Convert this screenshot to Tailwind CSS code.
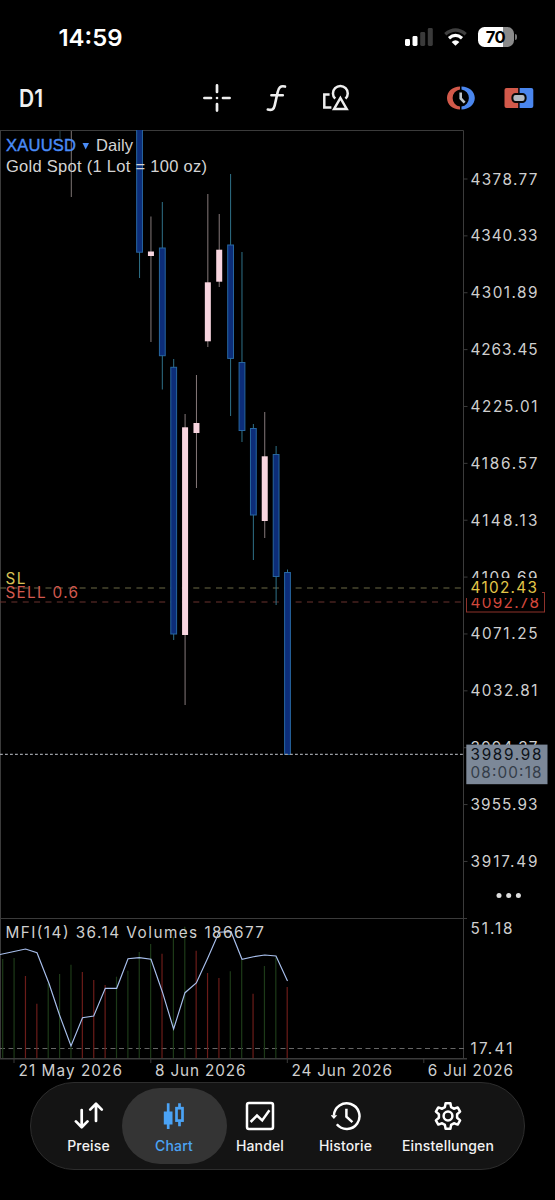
<!DOCTYPE html>
<html lang="de">
<head>
  <meta charset="UTF-8" />
  <meta name="viewport" content="width=device-width, initial-scale=1.0" />
  <title>XAUUSD Daily</title>
  <script src="https://cdn.jsdelivr.net/npm/@tailwindcss/browser@4"></script>
</head>
<body class="bg-black text-white font-['Inter','Liberation_Sans',sans-serif]">
<div class="w-[555px] h-[1200px] flex flex-col overflow-hidden bg-black">

  <!-- status bar -->
  <header class="h-[65px] flex items-center justify-between pl-[56px] pr-[38px] pt-[9px] shrink-0">
    <svg class="w-[70px] h-[32px]" viewBox="0 0 70 32">
      <text x="2.5" y="24.8" textLength="64" lengthAdjust="spacingAndGlyphs" class="fill-white text-[23.5px] font-semibold">14:59</text>
    </svg>
    <div class="flex items-center gap-[11px]">
      <svg class="w-[28px] h-[18px]" viewBox="0 0 28 18">
        <rect x="0" y="11" width="5" height="7" rx="1.4" fill="#fff" />
        <rect x="7.5" y="8" width="5" height="10" rx="1.4" fill="#fff" />
        <rect x="15.2" y="4" width="5" height="14" rx="1.4" fill="#3a3a3a" />
        <rect x="22.8" y="0" width="5" height="18" rx="1.4" fill="#3a3a3a" />
      </svg>
      <svg class="w-[23px] h-[18px]" viewBox="0 0 23 18" fill="none">
        <path d="M1.3 6.2Q11.5 -2.2 21.7 6.2" stroke="#3f3f3f" stroke-width="3.4" />
        <path d="M5 10.2Q11.5 4.6 18 10.2" stroke="#fff" stroke-width="3.2" />
        <path d="M7.6 14Q11.5 10.6 15.4 14L11.5 17.8Z" fill="#fff" />
      </svg>
      <div class="flex items-center gap-[1.5px]">
        <div class="w-[36px] h-[20px] rounded-[6.5px] bg-linear-to-r from-white from-70% to-[#8a8a8a] to-70% text-black text-[16.5px] leading-[20px] font-bold text-center tracking-tight">70</div>
        <div class="w-[2px] h-[6px] rounded-r-full bg-[#777]"></div>
      </div>
    </div>
  </header>

  <!-- toolbar -->
  <div class="h-[65px] flex items-center justify-between pl-[17px] pr-[21px] shrink-0">
    <svg class="w-[30px] h-[34px]" viewBox="0 0 30 34">
      <text x="2" y="25.5" textLength="24" lengthAdjust="spacingAndGlyphs" class="fill-[#f0f0f0] text-[24px] font-semibold">D1</text>
    </svg>
    <div class="flex items-center gap-[34px] pl-[59px]">
      <svg class="w-[30px] h-[30px]" viewBox="0 0 30 30" stroke="#eee" stroke-width="2.7" stroke-linecap="round">
        <path d="M15 2.4V9M15 21V27.6M2.4 15H9M21 15H27.6" />
        <path d="M15 15V15.01" stroke-width="2.6" />
      </svg>
      <svg class="w-[22px] h-[30px]" viewBox="0 0 22 30" fill="none" stroke="#eee" stroke-width="2.6" stroke-linecap="round">
        <path d="M19 3.6C14.5 2.4 12.6 4.6 11.7 9L8.7 22.4C7.9 26.2 6 27.6 1.8 26.5M5.4 12.3H16.8" />
      </svg>
      <svg class="w-[28px] h-[30px]" viewBox="0 0 28 30" fill="none" stroke="#eee" stroke-width="2.5">
        <path d="M7.6 11.6H2.3V24.6H9.4" />
        <path d="M13.2 15.7A7.4 7.4 0 1 1 23.5 15.7" />
        <path d="M18.4 15L24.7 26H12.1Z" />
      </svg>
    </div>
    <div class="flex items-center gap-[28px]">
      <svg class="w-[30px] h-[26px]" viewBox="0 0 30 26">
        <path d="M14 1.5C6.5 1.5 1 6.5 1 13S6.5 24.5 14 24.5V21.6A8.7 8.7 0 0 1 14 4.4Z" fill="#d2594a" />
        <path d="M15.5 1.5C23 1.5 28.8 6.5 28.8 13S23 24.5 15.5 24.5V21.6A8.7 8.7 0 0 0 15.5 4.4Z" fill="#4a86ee" />
        <path d="M14.7 7.5V13.5L18.6 17.6" fill="none" stroke="#bcc3ca" stroke-width="2.6" />
      </svg>
      <svg class="w-[30px] h-[20px]" viewBox="0 0 30 20">
        <path d="M2.5 0H14.2V20H2.5Q.5 20 .5 18V2Q.5 0 2.5 0Z" fill="#d2594a" />
        <path d="M15.6 0H27.3Q29.3 0 29.3 2V18Q29.3 20 27.3 20H15.6Z" fill="#4a86ee" />
        <rect x="8.4" y="6" width="13.2" height="8" rx="3.2" fill="#b4bac2" stroke="#080808" stroke-width="2" />
      </svg>
    </div>
  </div>

  <!-- chart -->
  <svg id="chart" class="w-[555px] h-[952px] shrink-0 block" viewBox="0 130 555 952">
    <g id="frame" stroke="#3b3b3b" fill="none">
      <path d="M0 130.5H463.5V1058.5M.5 130V1058" />
      <path d="M0 918.5H467" />
      <path d="M0 1058.7H467" stroke-width="1.4" />
      <path d="M14 1059V1063M150.8 1059V1063M287.3 1059V1063M423.8 1059V1063" />
    </g>
    <path d="M0 588H463" stroke="#6d6a47" stroke-dasharray="6 5.37" />
    <path d="M0 602H463" stroke="#6b332f" stroke-dasharray="6 5.37" />
    <path d="M0 1048.5H467" stroke="#666" stroke-dasharray="5 3.5" />
    <g id="volumes"></g>
    <g id="candles"></g>
    <path d="M0 754.3H464" stroke="#9b9ea5" stroke-width="1.2" stroke-dasharray="2.8 2.2" />
    <polyline fill="none" stroke="#a9c0ee" stroke-width="1.15" points="0,954.5 14,951.5 25.5,949 37,952.7 49,983.5 59.5,1015 71,1046 82.5,1017.7 93.7,1016 105.3,988.3 116.7,988.3 128,958.7 139.3,957.7 151,959.3 162.3,991.7 173.6,1029 185,992.7 196.3,983 208,957.5 219,932.3 231,931.7 242,959.3 253.5,956.7 264.7,955 276,956 287.5,981" />

    <g class="font-['Liberation_Sans',sans-serif] text-[16.5px]" fill="#d4d4d4">
      <text x="6" y="151" textLength="70" fill="#4a8cf7" stroke="#4a8cf7" stroke-width=".4">XAUUSD</text>
      <path d="M82.5 143H89L85.7 149.5Z" fill="#4a8cf7" />
      <text x="96" y="151" textLength="37">Daily</text>
      <text x="6" y="172" textLength="201">Gold Spot (1 Lot = 100 oz)</text>
    </g>
    <g class="text-[15.3px]" fill="#cfcfcf">
      <text x="5.5" y="583.5" textLength="20" fill="#d8c255">SL</text>
      <text x="5.5" y="597.7" textLength="72.5" fill="#d2594f">SELL 0.6</text>
      <text x="5.5" y="937.8" textLength="258.5">MFI(14) 36.14 Volumes 186677</text>
      <text x="18.5" y="1076.4" textLength="103.5">21 May 2026</text>
      <text x="155" y="1076.4" textLength="90.5">8 Jun 2026</text>
      <text x="291.5" y="1076.4" textLength="100.5">24 Jun 2026</text>
      <text x="427.7" y="1076.4" textLength="85.3">6 Jul 2026</text>
      <text x="470.5" y="933.8" textLength="42">51.18</text>
      <text x="470.5" y="1054.4" textLength="42">17.41</text>
    </g>
    <g id="scale" class="text-[15.3px]" fill="#cfcfcf"></g>

    <!-- order and bid tags over the scale -->
    <g class="text-[15.3px]">
      <rect x="466.5" y="592.5" width="78" height="19.5" fill="#000" stroke="#8e322b" />
      <text x="470.5" y="608" textLength="68.5" fill="#d2483c">4092.78</text>
      <rect x="465" y="578" width="77" height="20" fill="#000" />
      <text x="470.5" y="593.3" textLength="66.5" fill="#e3c648">4102.43</text>
      <rect x="466.3" y="744.6" width="81.2" height="39.6" fill="#7c8898" />
      <text x="470.5" y="759.7" textLength="71" fill="#0d1219">3989.98</text>
      <text x="470.5" y="778.3" textLength="71" fill="#343d49">08:00:18</text>
    </g>
    <g fill="#dedede">
      <circle cx="499" cy="895.5" r="2.5" />
      <circle cx="508.7" cy="895.5" r="2.5" />
      <circle cx="518.4" cy="895.5" r="2.5" />
    </g>
  </svg>

  <!-- tab bar -->
  <nav class="ml-[30px] w-[495px] h-[88px] shrink-0 flex items-center rounded-full border border-[#2d2d2d] bg-[#141414] pl-[24.5px] text-[14px] leading-[18px] font-medium tracking-[0.15px] text-[#f2f2f2]">
    <a class="w-[66px] h-[76px] flex flex-col items-center pt-[13px] gap-[6px]">
      <svg class="w-[30px] h-[30px]" viewBox="0 0 30 30" fill="none" stroke="#fff" stroke-width="2.7" stroke-linecap="round" stroke-linejoin="round">
        <path d="M7.7 9V26M1.9 20.4L7.7 26.2L13.5 20.4" />
        <path d="M22 20V3M16.2 8.6L22 2.8L27.8 8.6" />
      </svg>
      <span>Preise</span>
    </a>
    <a class="w-[105px] h-[76px] flex flex-col items-center pt-[13px] gap-[6px] rounded-full bg-[#343434] text-[#4ba3f5]">
      <svg class="w-[30px] h-[30px]" viewBox="0 0 30 30" fill="none" stroke="currentColor" stroke-width="2.7">
        <path d="M9.2 2.3V28M20.5 2.3V8M20.5 21V25.2" />
        <rect x="4.8" y="10.5" width="8.7" height="13" fill="currentColor" stroke="none" />
        <rect x="17.5" y="7.2" width="6" height="12.4" />
      </svg>
      <span>Chart</span>
    </a>
    <a class="w-[67px] h-[76px] flex flex-col items-center pt-[13px] gap-[6px]">
      <svg class="w-[30px] h-[30px]" viewBox="0 0 30 30" fill="none" stroke="#fff" stroke-width="2.5">
        <rect x="2" y="2" width="26" height="26" rx="2" />
        <path d="M5.6 21L12 14.5L17.2 19.4L24.4 9.2" />
      </svg>
      <span>Handel</span>
    </a>
    <a class="w-[104px] h-[76px] flex flex-col items-center pt-[13px] gap-[6px]">
      <svg class="w-[30px] h-[30px]" viewBox="0 0 30 30" fill="none" stroke="#fff" stroke-width="2.5">
        <path d="M2.9 14.5A12.8 12.8 0 1 1 5.8 23.3" />
        <path d="M-.4 14.3H6.2L2.9 18Z" fill="#fff" stroke="none" />
        <path d="M15.4 7.8V15.7L21.4 21.2" />
      </svg>
      <span>Historie</span>
    </a>
    <a class="w-[101px] h-[76px] flex flex-col items-center pt-[13px] gap-[6px]">
      <svg class="w-[30px] h-[30px]" viewBox="0 0 30 30" fill="none" stroke="#fff" stroke-width="2.5" stroke-linejoin="round">
        <path d="M12.6 2.2H17.4L18.1 6.1L20.9 7.7L24.7 6.4L27.1 10.6L24.1 13.2V16.8L27.1 19.4L24.7 23.6L20.9 22.3L18.1 23.9L17.4 27.8H12.6L11.9 23.9L9.1 22.3L5.3 23.6L2.9 19.4L5.9 16.8V13.2L2.9 10.6L5.3 6.4L9.1 7.7L11.9 6.1Z" />
        <circle cx="15" cy="15" r="4.4" />
      </svg>
      <span>Einstellungen</span>
    </a>
  </nav>
</div>

<script>
  const step = 11.38;

  // [column, high, body top, body bottom, low, falling]
  const candles = [
    [12, 130, 128, 252.2, 278, 1],
    [13, 216.5, 251.5, 256, 342, 0],
    [14, 202, 248, 355.7, 389.5, 1],
    [15, 359, 367.3, 634, 640, 1],
    [16, 414, 427.3, 635, 705, 0],
    [17, 375, 423, 433, 488, 0],
    [18, 194, 282.3, 341.3, 347, 0],
    [19, 214, 249.7, 281.7, 287, 0],
    [20, 174, 245, 358.4, 416, 1],
    [21, 252, 362.5, 430.5, 442, 1],
    [22, 424, 428.5, 515, 560, 1],
    [23, 412, 456.3, 521, 538, 0],
    [24, 446, 454.5, 576.5, 605, 1],
    [25, 569.5, 572.5, 754.5, 755, 1]
  ];
  let html = `<path d="M71.3 131V197" stroke="#7d7573" /><path d="M60 131V139" stroke="#274548" />`;
  candles.forEach(([i, high, top, bottom, low, falling]) => {
    const x = 3 + i * step;
    html += `<path d="M${x} ${high}V${low}" stroke="${falling ? '#2f7188' : '#85797a'}" />`;
    html += falling
      ? `<rect x="${x - 2.9}" y="${top}" width="5.8" height="${bottom - top}" fill="#0c2d79" stroke="#2766a0" />`
      : `<rect x="${x - 3}" y="${top}" width="6" height="${bottom - top}" fill="#f8d5df" />`;
  });
  document.getElementById("candles").innerHTML = html;

  // tick volumes, negative = lower than the bar before
  const volumes = [959, 958, -976, -1003.7, 983, 974, 964.7, -972, -980, -985, 976.7, 970.7, 952, 944, -953.7, 936.7, 926.7, -950.7, -973, -978, 971.3, 960, -993.7, 966, 957.3, -987];
  document.getElementById("volumes").innerHTML = volumes.map((v, i) =>
    `<path d="M${2.7 + i * step} ${Math.abs(v)}V1058" stroke="${v < 0 ? '#6b1c19' : '#1d3a18'}" stroke-width="1.2" />`
  ).join("");

  const prices = ["4378.77", "4340.33", "4301.89", "4263.45", "4225.01", "4186.57", "4148.13", "4109.69", "4071.25", "4032.81", "3994.37", "3955.93", "3917.49"];
  document.getElementById("scale").innerHTML = prices.map((p, i) => {
    const y = 179 + i * 56.87;
    return `<path d="M464 ${y}H467.5" stroke="#3b3b3b" /><text x="470.5" y="${y + 5.5}" textLength="67">${p}</text>`;
  }).join("");
</script>
</body>
</html>
